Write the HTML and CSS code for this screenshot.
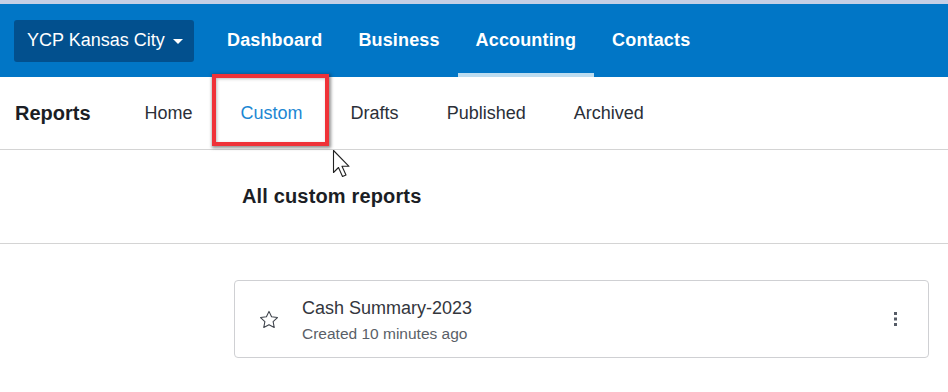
FILE: index.html
```html
<!DOCTYPE html>
<html lang="en">
<head>
  <meta charset="UTF-8" />
  <title>Reports - Custom</title>
  <link rel="stylesheet" href="styles.css">
</head>
<body>

  <div class="topstrip"></div>

  <!-- main header -->
  <header class="header">
    <button class="org-switch">YCP Kansas City <span class="caret"></span></button>
    <nav class="main-nav">
      <a class="main-link">Dashboard</a>
      <a class="main-link">Business</a>
      <a class="main-link active">Accounting</a>
      <a class="main-link">Contacts</a>
    </nav>
  </header>

  <!-- reports sub nav -->
  <div class="subnav">
    <span class="subnav-title">Reports</span>
    <a class="sub-link">Home</a>
    <a class="sub-link current">Custom</a>
    <a class="sub-link">Drafts</a>
    <a class="sub-link">Published</a>
    <a class="sub-link">Archived</a>
  </div>

  <div class="page-head">
    <h2>All custom reports</h2>
  </div>

  <div class="report-list">
    <div class="report-card">
      <svg class="star" width="22" height="22" viewBox="0 0 24 24">
        <path d="M12 2.6l2.8 5.9 6.4.85-4.7 4.45 1.2 6.4L12 17.1l-5.7 3.1 1.2-6.4L2.8 9.35l6.4-.85z" fill="none" stroke="#3f444c" stroke-width="1.2" stroke-linejoin="round"/>
      </svg>
      <div class="report-info">
        <div class="report-name">Cash Summary-2023</div>
        <div class="report-meta">Created 10 minutes ago</div>
      </div>
      <svg class="kebab" width="6" height="16" viewBox="0 0 6 16">
        <rect x="1" y="1" width="3" height="3" fill="#555b66"/>
        <rect x="1" y="6.5" width="3" height="3" fill="#555b66"/>
        <rect x="1" y="12" width="3" height="3" fill="#555b66"/>
      </svg>
    </div>
  </div>

  <!-- screenshot annotation + pointer -->
  <div class="highlight-box"></div>
  <svg class="cursor" width="20" height="30" viewBox="0 0 20 30">
    <path d="M1.5 1.5v22l5-5 4 9 3.5-1.6-4-8.6h7z" fill="#fff" stroke="#222" stroke-width="1.1" stroke-linejoin="round"/>
  </svg>

</body>
</html>
```

FILE: styles.css
```css
html, body {
  margin: 0;
  font-family: 'Liberation Sans', Arial, sans-serif;
  background-color: #fff;
  color: #262a33;
}

body {
  position: relative;
  width: 948px;
  height: 392px;
  overflow: hidden;
}

.topstrip {
  height: 4px;
  background-color: #c5cfe5;
}

.header {
  height: 73px;
  background-color: #0176c6;
  display: flex;
  align-items: center;
  padding-left: 14px;
}

.org-switch {
  height: 42px;
  width: 180px;
  padding: 0 0 0 13px;
  text-align: left;
  border: none;
  border-radius: 3px;
  background-color: #02508e;
  color: #fff;
  font-family: inherit;
  font-size: 18px;
  display: flex;
  align-items: center;
}

.caret {
  display: inline-block;
  margin-left: 8px;
  margin-top: 1px;
  border-left: 5px solid transparent;
  border-right: 5px solid transparent;
  border-top: 5px solid #fff;
}

.main-nav {
  display: flex;
  align-self: stretch;
  margin-left: 15px;
}

.main-link {
  display: flex;
  align-items: center;
  padding: 0 18px;
  color: #fff;
  font-size: 18px;
  font-weight: bold;
  letter-spacing: 0.15px;
  box-sizing: border-box;
  border-bottom: 4px solid transparent;
  padding-top: 3px;
}

.main-link.active {
  border-bottom-color: #bcdcf0;
}

.subnav {
  height: 72px;
  border-bottom: 1px solid #d4d4d4;
  display: flex;
  align-items: center;
  padding-left: 15px;
}

.subnav-title {
  font-size: 20px;
  font-weight: bold;
  color: #1b1e25;
  margin-right: 30px;
}

.sub-link {
  padding: 0 24px;
  font-size: 18px;
  color: #2b2f38;
}

.sub-link.current {
  color: #1c87d3;
}

.page-head {
  height: 93px;
  border-bottom: 1px solid #d4d4d4;
  display: flex;
  align-items: center;
  padding-left: 242px;
}

.page-head h2 {
  margin: 0;
  font-size: 20px;
  font-weight: bold;
  letter-spacing: 0.15px;
  color: #1b1e25;
}

.report-list {
  padding: 36px 19px 0 234px;
}

.report-card {
  height: 76px;
  border: 1px solid #cfd0d3;
  border-radius: 4px;
  display: flex;
  align-items: center;
}

.star {
  margin-left: 23px;
  margin-top: 2px;
}

.report-info {
  flex: 1;
  margin-left: 22px;
  padding-top: 1px;
}

.report-name {
  font-size: 18px;
  color: #33363d;
  line-height: 22px;
}

.report-meta {
  font-size: 15.5px;
  color: #5a5f68;
  margin-top: 6px;
}

.kebab {
  margin-right: 29px;
}

.highlight-box {
  position: absolute;
  left: 212px;
  top: 74px;
  width: 109px;
  height: 64px;
  border: 4px solid #ef3238;
  box-shadow: 1px 1px 3px 1px rgba(40, 40, 40, 0.5), inset 1px 1px 3px rgba(40, 40, 40, 0.3);
}

.cursor {
  position: absolute;
  left: 332px;
  top: 149px;
}
```
